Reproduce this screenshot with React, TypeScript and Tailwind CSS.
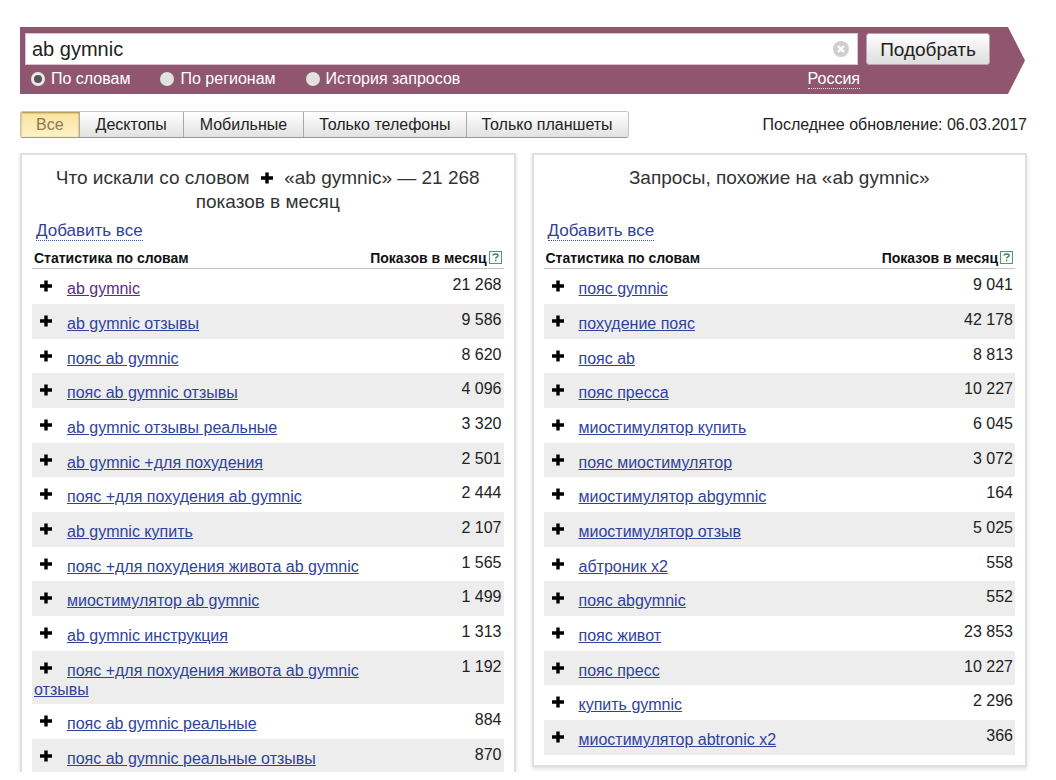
import type { ReactNode } from "react";

type Row = { query: string; shows: string; visited?: boolean };

const wordRows: Row[] = [
  { query: "ab gymnic", shows: "21 268", visited: true },
  { query: "ab gymnic отзывы", shows: "9 586" },
  { query: "пояс ab gymnic", shows: "8 620" },
  { query: "пояс ab gymnic отзывы", shows: "4 096" },
  { query: "ab gymnic отзывы реальные", shows: "3 320" },
  { query: "ab gymnic +для похудения", shows: "2 501" },
  { query: "пояс +для похудения ab gymnic", shows: "2 444" },
  { query: "ab gymnic купить", shows: "2 107" },
  { query: "пояс +для похудения живота ab gymnic", shows: "1 565" },
  { query: "миостимулятор ab gymnic", shows: "1 499" },
  { query: "ab gymnic инструкция", shows: "1 313" },
  { query: "пояс +для похудения живота ab gymnic отзывы", shows: "1 192" },
  { query: "пояс ab gymnic реальные", shows: "884" },
  { query: "пояс ab gymnic реальные отзывы", shows: "870" },
];

const similarRows: Row[] = [
  { query: "пояс gymnic", shows: "9 041" },
  { query: "похудение пояс", shows: "42 178" },
  { query: "пояс ab", shows: "8 813" },
  { query: "пояс пресса", shows: "10 227" },
  { query: "миостимулятор купить", shows: "6 045" },
  { query: "пояс миостимулятор", shows: "3 072" },
  { query: "миостимулятор abgymnic", shows: "164" },
  { query: "миостимулятор отзыв", shows: "5 025" },
  { query: "абтроник x2", shows: "558" },
  { query: "пояс abgymnic", shows: "552" },
  { query: "пояс живот", shows: "23 853" },
  { query: "пояс пресс", shows: "10 227" },
  { query: "купить gymnic", shows: "2 296" },
  { query: "миостимулятор abtronic x2", shows: "366" },
];

const modes = ["По словам", "По регионам", "История запросов"];
const devices = ["Все", "Десктопы", "Мобильные", "Только телефоны", "Только планшеты"];

function Plus({ className }: { className?: string }) {
  return (
    <svg viewBox="0 0 12 12" className={`inline-block size-3 align-baseline ${className ?? ""}`} aria-hidden="true">
      <path d="M4.3 0.5h3.4v3.8h4.3v3.4h-4.3v3.8h-3.4v-3.8h-4.3v-3.4h4.3z" fill="#000" />
    </svg>
  );
}

function HelpIcon() {
  return (
    <svg viewBox="0 0 13 13" className="size-[13px]" fill="none" aria-hidden="true">
      <rect x="0.5" y="0.5" width="12" height="12" fill="#f6faf7" stroke="#5f8f78" />
      <path d="M4 4.6C4 3.4 5 3 6.5 3s2.6.5 2.6 1.6c0 1.3-2.4 1.3-2.4 2.9M6.7 8.8v1.4" stroke="#3f7a5c" strokeWidth="1.3" />
    </svg>
  );
}

function SearchBar() {
  return (
    <form className="mr-0.5 flex" onSubmit={(e) => e.preventDefault()}>
      <div className="min-w-0 flex-1 bg-[#91566f] pt-1.5 pb-1 pl-[5px]">
        <div className="flex gap-2">
          <div className="flex h-8 min-w-0 flex-1 items-center border border-[#d5c5cc] bg-white pr-2">
            <input
              aria-label="Запрос"
              defaultValue="ab gymnic"
              className="h-full min-w-0 flex-1 bg-transparent px-1.5 text-[20px] text-[#222] outline-none"
            />
            <button type="button" aria-label="Очистить">
              <svg viewBox="0 0 16 16" className="size-4" aria-hidden="true">
                <circle cx="8" cy="8" r="8" fill="#cfcfcf" />
                <path d="M5 5l6 6M11 5l-6 6" stroke="#fff" strokeWidth="2.4" />
              </svg>
            </button>
          </div>
          <button
            type="submit"
            className="h-8 w-[124px] rounded-[3px] border border-[#b9a3ad] bg-linear-to-b from-white to-[#dedede] text-[19px] leading-none text-[#222]"
          >
            Подобрать
          </button>
          <span className="w-2.5" />
        </div>
        <div className="mt-0.5 flex h-[23px] items-center text-[16px] text-white">
          <div className="flex gap-[30px] pl-1.5">
            {modes.map((mode, i) => (
              <label key={mode} className="flex items-center gap-1.5">
                <input
                  type="radio"
                  name="mode"
                  defaultChecked={i === 0}
                  className="size-3.5 appearance-none rounded-full bg-[#e2e2e2] checked:border-[3px] checked:border-[#e8e8e8] checked:bg-[#555]"
                />
                {mode}
              </label>
            ))}
          </div>
          <a href="#region" className="mr-[148px] ml-auto border-b border-dotted border-white/80 leading-[19px]">
            Россия
          </a>
        </div>
      </div>
      <svg viewBox="0 0 17 67" preserveAspectRatio="none" className="h-[67px] w-[17px]" aria-hidden="true">
        <path d="M0 0L17 33.5L0 67z" fill="#91566f" />
      </svg>
    </form>
  );
}

function Panel({ title, rows }: { title: ReactNode; rows: Row[] }) {
  return (
    <section className="border-2 border-[#e0e0e0] bg-white px-2.5 pt-[11px] pb-2.5 shadow-[0_2px_4px_rgba(0,0,0,0.12)]">
      <h2 className="h-12 px-4 text-center text-[19px] leading-6 text-[#333]">{title}</h2>
      <div className="mt-[5px] pl-1">
        <a href="#add-all" className="inline-block border-b border-dotted border-[#3c56a6] text-[17px] leading-[19px] text-[#2f429c]">
          Добавить все
        </a>
      </div>
      <table className="mt-1 w-full border-separate border-spacing-0 text-[#222]">
        <thead>
          <tr className="h-[22px] text-[14px] leading-5 text-[#111]">
            <th className="border-b border-[#c4c4c4] p-0 pl-0.5 text-left">Статистика по словам</th>
            <th className="w-[140px] border-b border-[#c4c4c4] p-0 pr-0.5">
              <span className="flex items-center justify-end gap-0.5 whitespace-nowrap">
                Показов в месяц
                <HelpIcon />
              </span>
            </th>
          </tr>
        </thead>
        <tbody>
          {rows.map((row) => (
            <tr key={row.query} className="h-[35px] align-top even:bg-[#ededed] nth-[3n]:h-[34px]">
              <td className="pt-2.5 pr-1 pb-[5px] pl-0.5 text-[16px] leading-[19px]">
                <button type="button" aria-label={`Добавить ${row.query}`} className="mr-[15px] pl-1.5">
                  <Plus className="mb-0.5" />
                </button>
                <a href="#query" className={row.visited ? "text-[#5c2d7c] underline" : "text-[#2f429c] underline"}>
                  {row.query}
                </a>
              </td>
              <td className="pt-1.5 pr-0.5 text-right text-[16px] leading-[19px] whitespace-nowrap">{row.shows}</td>
            </tr>
          ))}
        </tbody>
      </table>
    </section>
  );
}

export default function App() {
  return (
    <div className="h-screen bg-white pb-2 font-['Liberation_Sans',Arial,sans-serif]">
      <main className="h-full overflow-hidden pt-[27px] pr-[29px] pl-5">
        <SearchBar />
        <div className="mt-[17px] flex items-center justify-between text-[16px] text-[#222]">
          <div className="flex overflow-hidden rounded-[3px] border border-[#c4c4c4] border-b-[#999]">
            {devices.map((device, i) => (
              <button
                key={device}
                type="button"
                className={
                  i === 0
                    ? "h-[25px] bg-linear-to-b from-[#fbe3a0] to-[#fff1c4] px-[15px] text-[#8a7b4d] shadow-[inset_0_1px_2px_#a8893c]"
                    : i < 3
                      ? "h-[25px] border-l border-[#aaa] bg-linear-to-b from-white to-[#e2e2e2] px-4"
                      : "h-[25px] border-l border-[#aaa] bg-linear-to-b from-white to-[#e2e2e2] px-[15px]"
                }
              >
                {device}
              </button>
            ))}
          </div>
          <p>Последнее обновление: 06.03.2017</p>
        </div>
        <div className="mt-[15px] grid grid-cols-2 items-start gap-4">
          <Panel
            title={
              <>
                Что искали со словом <Plus className="mx-1.5" /> «ab gymnic» — 21 268 показов в месяц
              </>
            }
            rows={wordRows}
          />
          <Panel title="Запросы, похожие на «ab gymnic»" rows={similarRows} />
        </div>
      </main>
    </div>
  );
}
